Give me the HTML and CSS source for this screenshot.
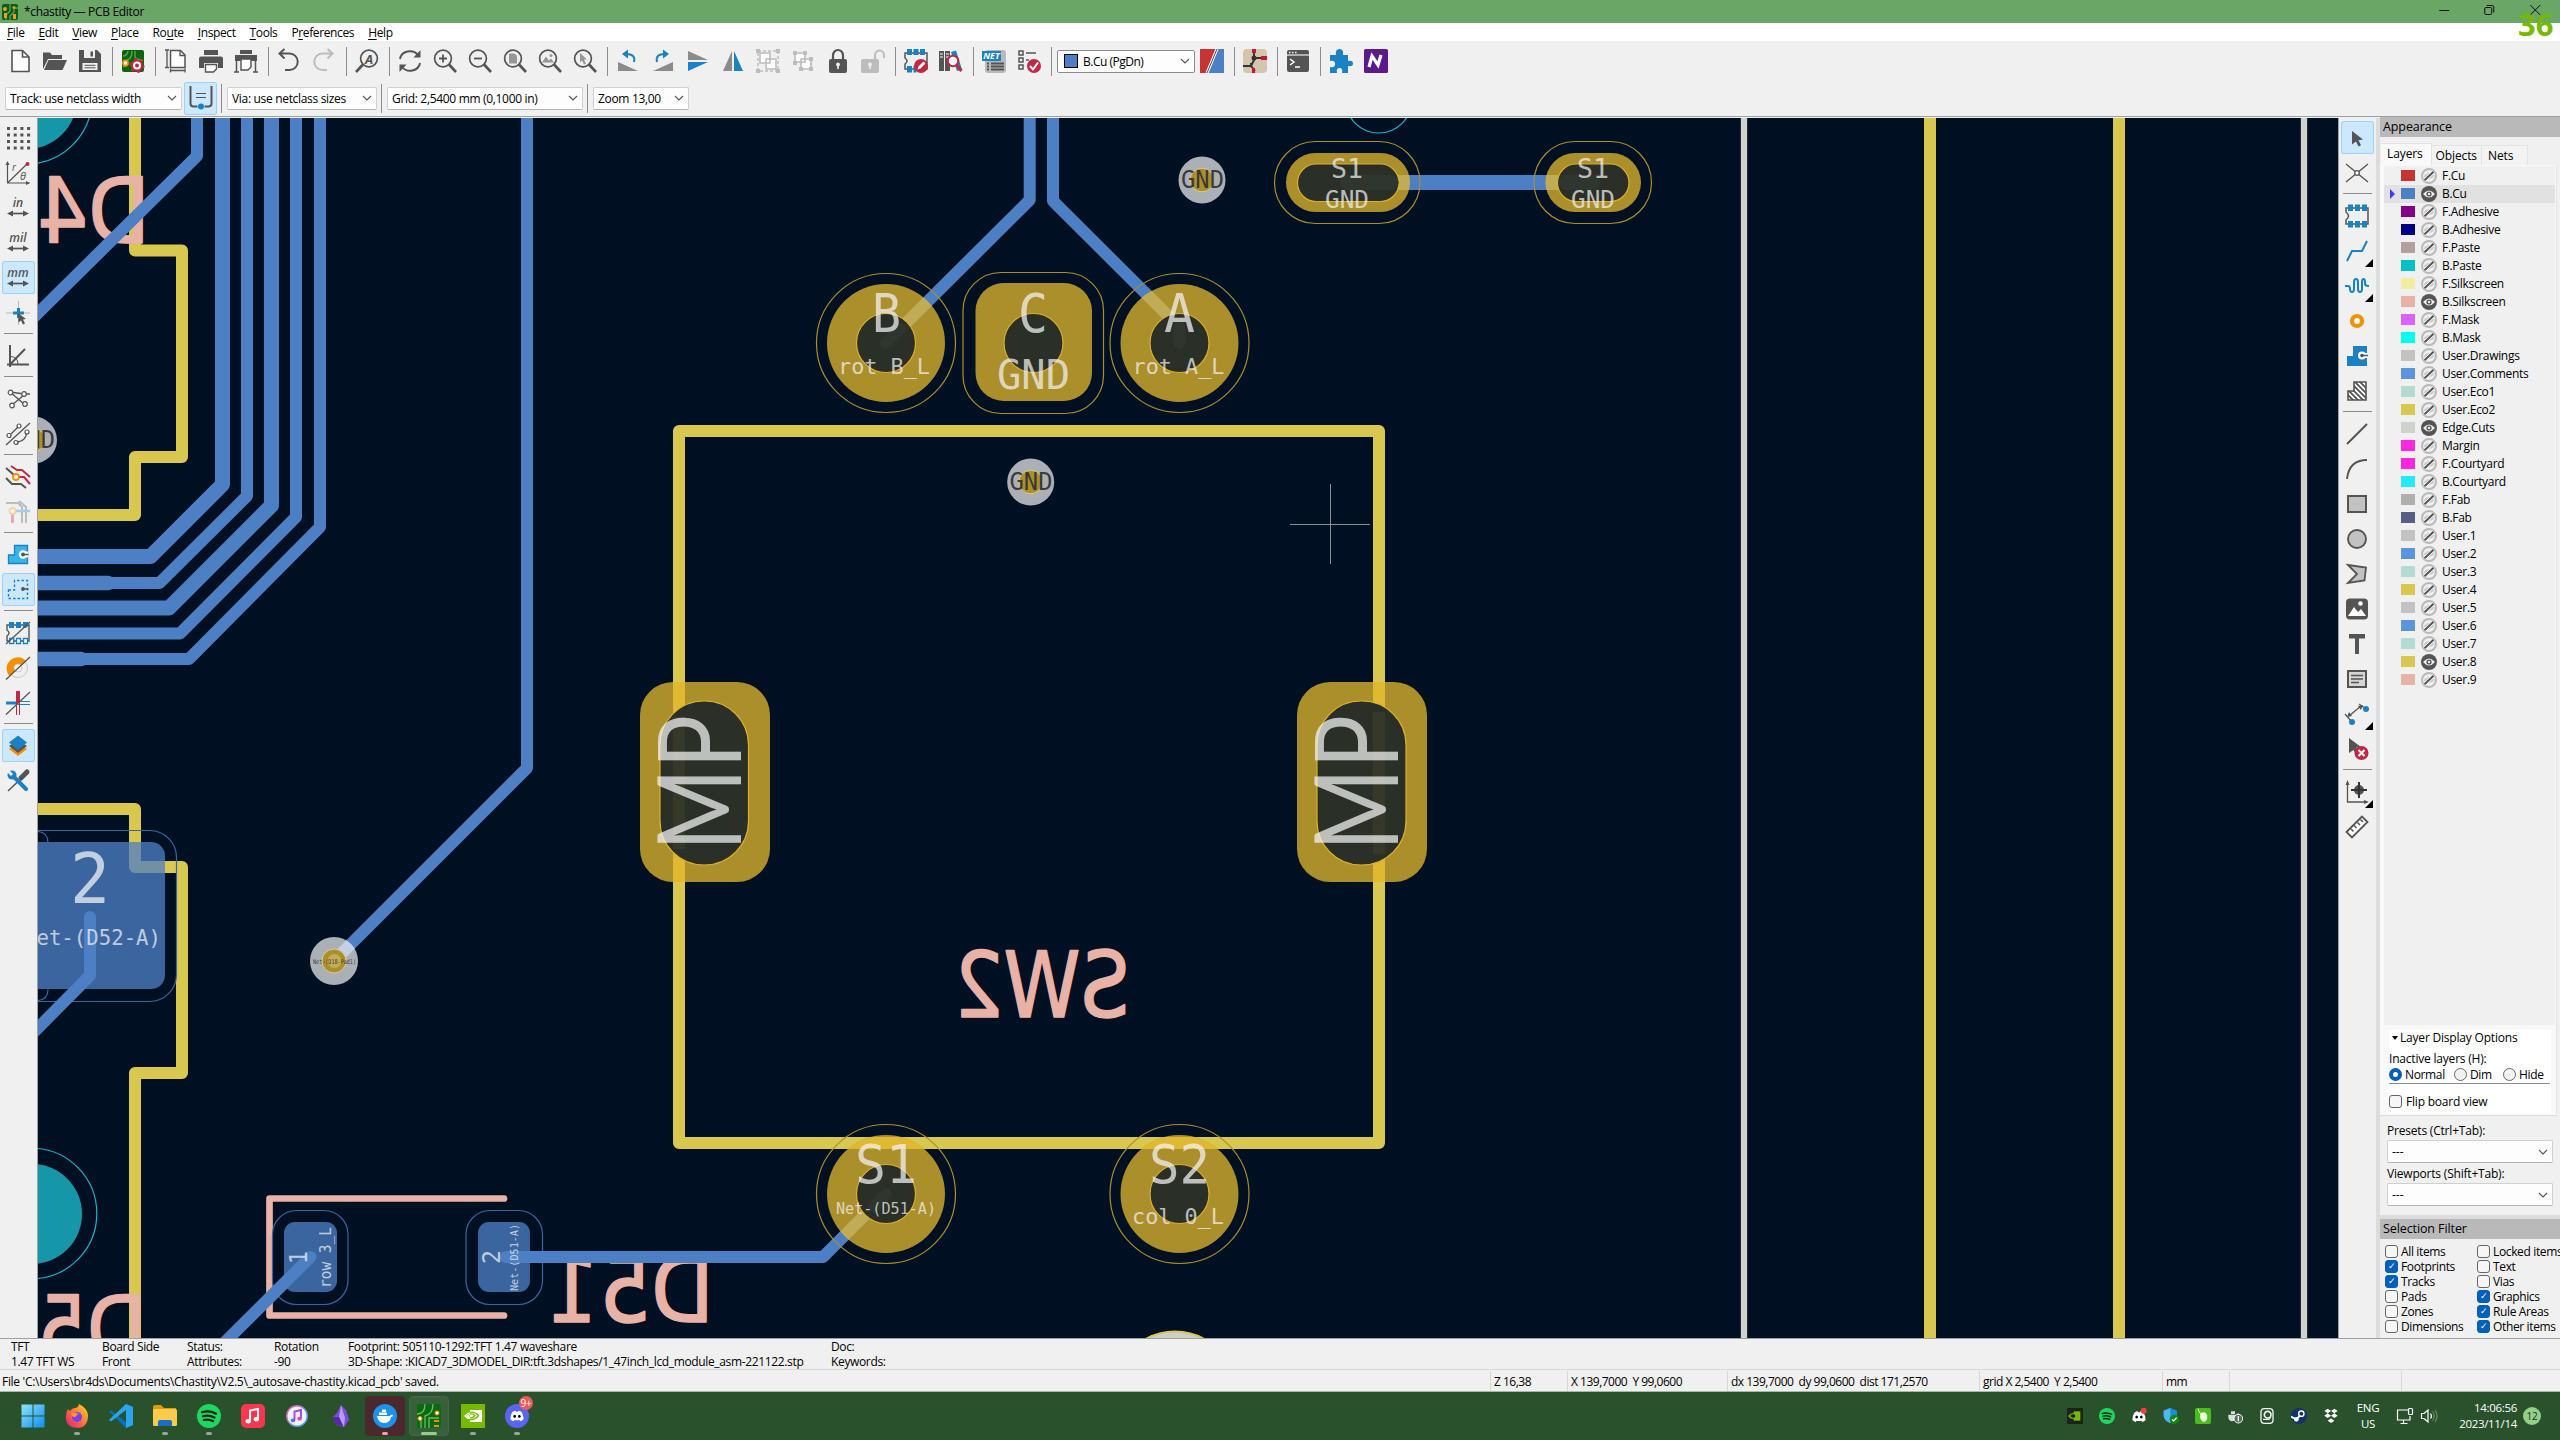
FILE: index.html
```html
<!DOCTYPE html>
<html lang="en">
<head>
<meta charset="utf-8">
<title>*chastity — PCB Editor</title>
<link rel="stylesheet" href="styles.css">
</head>
<body>
<svg class="defs" width="0" height="0">
  <defs>
    <symbol id="on" viewBox="0 0 16 16"><circle cx="8" cy="8" r="8" fill="#545454"/><path d="M2 8q6-7 12 0q-6 7-12 0z" fill="#f0f0f0"/><circle cx="8" cy="8" r="2.600" fill="#545454"/><circle cx="8" cy="8" r="1.200" fill="#f0f0f0"/></symbol>
    <symbol id="off" viewBox="0 0 16 16"><circle cx="8" cy="8" r="7" fill="#efefef" stroke="#b9b9b9" stroke-width="2"/><path d="M2.500 8q5.500-6 11 0q-5.500 6-11 0z" fill="#c9c9c9"/><path d="M3.500 12.500L12.500 3.500" stroke="#f6f6f6" stroke-width="3.800"/><path d="M3.500 12.300L12.500 3.700" stroke="#545454" stroke-width="1.900"/></symbol>
    <symbol id="chev" viewBox="0 0 10 6"><path d="M1 1l4 4 4-4" fill="none" stroke="#555" stroke-width="1.1"/></symbol>
    <symbol id="lens" viewBox="0 0 24 24"><circle cx="10" cy="9.500" r="8.400" fill="none" stroke="#545454" stroke-width="1.700"/><path d="M16 15.500l7 7.500" stroke="#545454" stroke-width="2.600"/></symbol>
    <symbol id="harrow" viewBox="0 0 24 24"><path d="M4 18.500h16" stroke="#545454" stroke-width="1.700"/><path d="M1 18.500l6-3v6zM23 18.500l-6-3v6z" fill="#545454"/></symbol>
    <symbol id="spot" viewBox="0 0 24 24"><circle cx="12" cy="12" r="12" fill="#1ed760"/><path d="M5 8.200q7.500-2 14 1.500M6 12.200q6-1.600 11.500 1.300M6.800 16q5-1.200 9.400 1.200" fill="none" stroke="#10241a" stroke-width="2.200" stroke-linecap="round"/></symbol>
    <symbol id="disc" viewBox="0 0 24 24"><path d="M5 6q3-2 5-2l.7 1.500h2.600L14 4q2 0 5 2 3 5 3 11-2 2.500-5 3l-1.500-2q-3.500 1-7 0L7 20q-3-.5-5-3 0-6 3-11z" fill="#fff"/><ellipse cx="8.500" cy="12.500" rx="2" ry="2.300"/><ellipse cx="15.500" cy="12.500" rx="2" ry="2.300"/></symbol>
    <symbol id="nv" viewBox="0 0 24 24"><path d="M9 6h12v12H9z" fill="#fff"/><path d="M4 12q5-6 11-1-5 7-11 1zM6.500 12q3-3 6.500-.5-3 4-6.500.5z" fill="none" stroke="#fff" stroke-width="1.200"/><path d="M9 8.300q5-.8 8.500 3.200Q14 16 9 15.700M9 10q3-.3 5 1.500-2 2.700-5 2.300" fill="none" stroke="#76b900" stroke-width="1.300"/></symbol>
  </defs>
</svg>

<header class="titlebar">
  <svg class="appicon" viewBox="0 0 16 16"><rect width="16" height="16" rx="2" fill="#0d5a1e"/><path d="M4 16V11l4-4V0M8 16v-4l4-4V4h4" fill="none" stroke="#56a84a" stroke-width="1.300"/><circle cx="3" cy="5" r="2" fill="#f29b1d"/><circle cx="12" cy="3.500" r="1.500" fill="#f29b1d"/><path d="M2 9h3v5H2zM11 10h3v5h-3z" fill="#f29b1d"/></svg>
  <span class="title">*chastity — PCB Editor</span>
  <div class="winbtns">
    <svg viewBox="0 0 12 12"><path d="M1 6.500h10" stroke="#111"/></svg>
    <svg viewBox="0 0 12 12"><rect x="1.500" y="3.500" width="7" height="7" rx="1.200" fill="none" stroke="#111"/><path d="M3.500 1.500h5.500q1.500 0 1.500 1.500v5.500" fill="none" stroke="#111"/></svg>
    <svg viewBox="0 0 12 12"><path d="M1 1l10 10M11 1L1 11" stroke="#111"/></svg>
  </div>
</header>
<div class="fps">36</div>

<nav class="menubar">
  <span><u>F</u>ile</span><span><u>E</u>dit</span><span><u>V</u>iew</span><span><u>P</u>lace</span><span>Ro<u>u</u>te</span><span><u>I</u>nspect</span><span><u>T</u>ools</span><span>P<u>r</u>eferences</span><span><u>H</u>elp</span>
</nav>

<div class="toolbar top">
  <i><svg viewBox="0 0 24 24"><path d="M4 1.500h10.500L21 8v14.500H4z" fill="#fcfcfc" stroke="#545454" stroke-width="1.600"/><path d="M14.500 1.500V8H21" fill="none" stroke="#545454" stroke-width="1.600"/></svg></i>
  <i><svg viewBox="0 0 24 24"><path d="M0 20V3.500h7l2 2.500h10v4H5z" fill="#545454"/><path d="M5.500 11H24l-4.500 10H1z" fill="#545454"/></svg></i>
  <i><svg viewBox="0 0 24 24"><path d="M1 1h18l4 4v18H1z" fill="#545454"/><path d="M6 1h11v8H6zM4.500 14h15v7h-15z" fill="#efefef"/><path d="M12.500 2.500h2.500v5h-2.500z" fill="#545454"/><path d="M6.500 16.300h11M6.500 18.800h11" stroke="#545454" stroke-width="1"/></svg></i>
  <b></b>
  <i><svg viewBox="0 0 24 24"><rect x="1" y="1" width="22" height="22" rx="2" fill="#0b640b"/><path d="M2 12q9 0 9-10M2 7q4 0 5-5M14 2v5q0 4 8 4M2 18l5-2" fill="none" stroke="#47a847" stroke-width="1.500"/><circle cx="4.500" cy="14" r="2.600" fill="#fff" stroke="#f29100" stroke-width="1.600"/><circle cx="16" cy="16.500" r="5" fill="#fff" stroke="#c22746" stroke-width="2"/><circle cx="16" cy="16.500" r="6.600" fill="none" stroke="#c22746" stroke-width="2" stroke-dasharray="3 3.900"/><circle cx="16" cy="16.500" r="2" fill="#c22746"/></svg></i>
  <b></b>
  <i><svg viewBox="0 0 24 24"><path d="M6.500 1.500h10L21 6v12.500H6.500z" fill="#fcfcfc" stroke="#545454" stroke-width="1.500"/><path d="M16 1.500V6.500h5M1 1h4M1 18.500h4M3 1v17M6.500 19.500v4M21 19.500v4M6.500 21.500H21" fill="none" stroke="#545454" stroke-width="1.300"/></svg></i>
  <i><svg viewBox="0 0 24 24"><path d="M5 1h14v5H5zM2 7.500h20q2 0 2 2V19h-5v-5H5v5H0V9.500q0-2 2-2z" fill="#545454"/><path d="M6.500 15.500h11V20l-3 3h-8z" fill="#fcfcfc" stroke="#545454" stroke-width="1.400"/></svg></i>
  <i><svg viewBox="0 0 24 24"><path d="M6 1h12v4H6zM1 6h22v6H1z" fill="#545454"/><path d="M2.500 12v11M21.500 12v11M0 23h5M19 23h5" stroke="#545454" stroke-width="1.500"/><path d="M7 10h10v8l-3 3H7z" fill="#fcfcfc" stroke="#545454" stroke-width="1.400"/></svg></i>
  <b></b>
  <i><svg viewBox="0 0 24 24"><path d="M3 4.500h9.500a8 8 0 0 1 0 16.500H8M7.500 0L2.500 4.500l5 5" fill="none" stroke="#545454" stroke-width="2"/></svg></i>
  <i><svg viewBox="0 0 24 24"><path d="M20 4.500h-9.500a8 8 0 0 0 0 16.500H15M15.500 0l5 4.500-5 5" fill="none" stroke="#bcbcbc" stroke-width="2"/></svg></i>
  <b></b>
  <i><svg viewBox="0 0 24 24"><circle cx="14" cy="9.500" r="8.400" fill="none" stroke="#545454" stroke-width="1.700"/><path d="M8 15.500L1 23" stroke="#545454" stroke-width="2.600"/><text x="14" y="14.500" text-anchor="middle" font-size="13" font-weight="700" fill="#545454">A</text></svg></i>
  <b></b>
  <i><svg viewBox="0 0 24 24"><path d="M2 10a10 9 0 0 1 18-4M22 14a10 9 0 0 1-18 4" fill="none" stroke="#545454" stroke-width="1.900"/><path d="M22.500 1v7.500h-7zM1.500 23v-7.500h7z" fill="#545454"/></svg></i>
  <i><svg viewBox="0 0 24 24"><use href="#lens"/><path d="M10 5.500v8M6 9.500h8" stroke="#545454" stroke-width="1.800"/></svg></i>
  <i><svg viewBox="0 0 24 24"><use href="#lens"/><path d="M6 9.500h8" stroke="#545454" stroke-width="1.800"/></svg></i>
  <i><svg viewBox="0 0 24 24"><use href="#lens"/><path d="M6 4.500h5.500L14 7v7.500H6z" fill="#979797"/></svg></i>
  <i><svg viewBox="0 0 24 24"><use href="#lens"/><path d="M4 13.500l4-6 3 4 2-2 3 4z" fill="#979797"/><circle cx="13" cy="6.500" r="1.500" fill="#979797"/></svg></i>
  <i><svg viewBox="0 0 24 24"><use href="#lens"/><path d="M7 4l7 6.500h-3l2 4-2 1-2-4-2 2z" fill="#979797"/></svg></i>
  <b></b>
  <i><svg viewBox="0 0 24 24"><path d="M2 13l20 9H2z" fill="#8b8b8b"/><path d="M18 13q2-8-8-8" fill="none" stroke="#1a81c4" stroke-width="2"/><path d="M6 5l6-4.500v9z" fill="#1a81c4"/></svg></i>
  <i><svg viewBox="0 0 24 24"><path d="M22 13L2 22h20z" fill="#8b8b8b"/><path d="M6 13q-2-8 8-8" fill="none" stroke="#1a81c4" stroke-width="2"/><path d="M18 5l-6-4.500v9z" fill="#1a81c4"/></svg></i>
  <i><svg viewBox="0 0 24 24"><path d="M2 2v9h20z" fill="#8b8b8b"/><path d="M2 22v-9h20z" fill="#1a81c4"/></svg></i>
  <i><svg viewBox="0 0 24 24"><path d="M2 22h9V2z" fill="#8b8b8b"/><path d="M22 22h-9V2z" fill="#1a81c4"/></svg></i>
  <i><svg viewBox="0 0 24 24"><rect x="2" y="2" width="20" height="20" fill="none" stroke="#bcbcbc" stroke-width="1.400" stroke-dasharray="3 2"/><path d="M4 4h10v10H4zM10 10h10v10H10z" fill="#fcfcfc" stroke="#bcbcbc" stroke-width="1.500"/><path d="M0 0h4v4H0zM20 0h4v4h-4zM0 20h4v4H0zM20 20h4v4h-4z" fill="#bcbcbc"/></svg></i>
  <i><svg viewBox="0 0 24 24"><path d="M4 4h10v9H4zM10 10h10v10H10z" fill="#fcfcfc" stroke="#bcbcbc" stroke-width="1.600"/><path d="M2 2h4v4H2zM12 2h4v4h-4zM2 12h4v4H2zM18 8h4v4h-4zM8 18h4v4H8zM18 18h4v4h-4z" fill="#bcbcbc"/></svg></i>
  <i><svg viewBox="0 0 24 24"><path d="M7 11V6.500a5 5.500 0 0 1 10 0V11" fill="none" stroke="#545454" stroke-width="2.200"/><rect x="3" y="10" width="18" height="14" rx="2" fill="#545454"/><circle cx="12" cy="15.500" r="1.900" fill="#efefef"/><path d="M11.200 16h1.600v4h-1.600z" fill="#efefef"/></svg></i>
  <i><svg viewBox="0 0 24 24"><path d="M14 11V6.500a4.500 5 0 0 1 9 0V9" fill="none" stroke="#bcbcbc" stroke-width="2"/><rect x="0" y="10" width="18" height="14" rx="2" fill="#bcbcbc"/><circle cx="9" cy="15.500" r="1.900" fill="#efefef"/><path d="M8.200 16h1.600v4H8.200z" fill="#efefef"/></svg></i>
  <b></b>
  <i><svg viewBox="0 0 24 24"><path d="M1 4h22v16H1v-5q4-3 0-6z" fill="#efefef" stroke="#545454" stroke-width="1.500"/><path d="M3 0h5v6H3zM9.500 0h5v6h-5zM16 0h5v6h-5zM3 17h5v6.500H3zM9.500 17h3v6.500h-3z" fill="#1a81c4"/><circle cx="17" cy="17" r="7" fill="#c22746"/><path d="M13.500 20.500l1-3 5-5 2 2-5 5z" fill="#fff"/></svg></i>
  <i><svg viewBox="0 0 24 24"><path d="M0 2h5v20H0zM6 2h5v20H6z" fill="#545454"/><path d="M12 3l5-1.500 6 19-5 1.500z" fill="#1a81c4"/><path d="M1 5h3M7 5h3M1 8h3M7 8h3" stroke="#fff"/><circle cx="14" cy="12" r="5.200" fill="#fff" stroke="#c22746" stroke-width="2"/><path d="M17.500 16l5 6" stroke="#c22746" stroke-width="3"/></svg></i>
  <b></b>
  <i><svg viewBox="0 0 24 24"><rect x="3" y="1" width="21" height="23" rx="3" fill="#b9b9b9"/><path d="M0 2h19v10H0z" fill="#1a81c4"/><text x="9.500" y="10.300" text-anchor="middle" font-size="9" font-weight="700" fill="#fff">NET</text><path d="M5 14.500h2M5 17.500h2M5 20.500h2M9 14.500h13M9 17.500h13M9 20.500h13" stroke="#545454" stroke-width="1.800"/></svg></i>
  <i><svg viewBox="0 0 24 24"><path d="M2 2h4v4H2zM2 9h4v4H2zM2 16h4v4H2z" fill="none" stroke="#545454" stroke-width="1.500"/><path d="M9 4h10M9 11h3" stroke="#545454" stroke-width="1.500"/><circle cx="17" cy="17" r="7" fill="#c22746"/><path d="M13 17l3 3.500 5-7" fill="none" stroke="#fff" stroke-width="2"/></svg></i>
  <b></b>
  <div class="select layer"><em></em><span>B.Cu (PgDn)</span><svg class="chev"><use href="#chev"/></svg></div>
  <i><svg viewBox="0 0 24 24"><path d="M0 0h17L7 24H0z" fill="#c83434"/><path d="M17 0h7v24H7z" fill="#4d7fc4"/><path d="M17 0L7 24" stroke="#fff" stroke-width="3"/><path d="M17 0L7 24" stroke="#222" stroke-width=".8"/></svg></i>
  <b></b>
  <i><svg viewBox="0 0 24 24"><rect width="24" height="24" rx="4" fill="#d3c6ac"/><path d="M11 4v7l-3 6M11 9h9M0 17h8l4 5M8 17v-3" fill="none" stroke="#333" stroke-width="2"/><path d="M9 0h4v4H9zM18 7h6v4h-6zM9 19h3v5H9z" fill="#c8143c"/><circle cx="11" cy="9" r="2.500" fill="#333"/></svg></i>
  <b></b>
  <i><svg viewBox="0 0 24 24"><rect x="1" y="1" width="22" height="22" rx="2" fill="#545454"/><path d="M1 6h22" stroke="#efefef" stroke-width="1.200"/><path d="M3 3.500h8" stroke="#efefef" stroke-width="1.600" stroke-dasharray="1.600 1.400"/><path d="M4 10l4 3-4 3M9 18h5" fill="none" stroke="#fff" stroke-width="1.500"/></svg></i>
  <b></b>
  <i><svg viewBox="0 0 24 24"><path d="M1 6h6q-1-6 3.500-6T14 6h5v6q5-1 5 2.500T19 17v7h-6q1-5-2.500-5T8 24H1v-6q5 1 5-3t-5-3z" fill="#1a81c4"/></svg></i>
  <i><svg viewBox="0 0 24 24"><rect width="24" height="24" rx="1.500" fill="#5b1a87"/><path d="M5 18L8 7l6 9 3-10" fill="none" stroke="#fff" stroke-width="3.200"/></svg></i>
</div>

<div class="toolbar second">
  <div class="select w177"><span>Track: use netclass width</span><svg class="chev"><use href="#chev"/></svg></div>
  <i class="active"><svg viewBox="0 0 24 24"><path d="M1.500 0v17.500q0 3 3 3h4M22.500 0v17.500q0 3-3 3h-4" fill="none" stroke="#545454" stroke-width="2"/><path d="M7 7.500h10M7 11.500h10" stroke="#545454" stroke-width="1.200"/><circle cx="12" cy="20.500" r="3" fill="#1a81c4"/></svg></i>
  <b></b>
  <div class="select w150"><span>Via: use netclass sizes</span><svg class="chev"><use href="#chev"/></svg></div>
  <b></b>
  <div class="select w196"><span>Grid: 2,5400 mm (0,1000 in)</span><svg class="chev"><use href="#chev"/></svg></div>
  <b></b>
  <div class="select w96"><span>Zoom 13,00</span><svg class="chev"><use href="#chev"/></svg></div>
</div>

<main class="work">
  <aside class="toolbar side left">
    <i><svg viewBox="0 0 24 24"><path d="M1 2.500h24M1 9h24M1 15.500h24M1 22h24" stroke="#545454" stroke-width="3" stroke-dasharray="3 3.700"/></svg></i>
    <i><svg viewBox="0 0 24 24"><path d="M1.500 1v21h22M1.500 22L21 3" fill="none" stroke="#545454" stroke-width="1.200"/><path d="M1.500 0l2 4h-4zM24 22l-4-2v4z" fill="#545454"/><circle cx="21.500" cy="3" r="2" fill="#c22746"/><text x="6" y="10" font-size="10" fill="#545454">r</text><text x="14" y="19" font-size="11" font-style="italic" fill="#545454">θ</text></svg></i>
    <i><svg viewBox="0 0 24 24"><text x="12" y="11" text-anchor="middle" font-size="12" font-weight="600" fill="#545454">in</text><use href="#harrow" y="-1"/></svg></i>
    <i><svg viewBox="0 0 24 24"><text x="12" y="11" text-anchor="middle" font-size="12" font-weight="600" fill="#545454">mil</text><use href="#harrow" y="-1"/></svg></i>
    <i class="active"><svg viewBox="0 0 24 24"><text x="12" y="11" text-anchor="middle" font-size="12" font-weight="600" fill="#545454">mm</text><use href="#harrow" y="-1"/></svg></i>
    <i><svg viewBox="0 0 24 24"><path d="M0 12h24M12.500 0v24" stroke="#b9b9b9"/><path d="M7 12h11M12.500 7v10" stroke="#1a81c4" stroke-width="3"/><path d="M12 12l8 6-3 .5 2 4-2 1-2-4-2.500 2z" fill="#545454"/></svg></i>
    <b></b>
    <i><svg viewBox="0 0 24 24"><path d="M4 1v22M1 20.500h22M4 20.500L19 5" stroke="#545454" stroke-width="2"/><path d="M4 12.500q8 0 8 8" fill="none" stroke="#545454"/></svg></i>
    <b></b>
    <i><svg viewBox="0 0 24 24"><path d="M4 5l14 12M6 18L18 8M4 5l14 2h6" fill="none" stroke="#545454" stroke-width="1.300"/><g fill="#fff" stroke="#545454" stroke-width="1.200"><circle cx="4.500" cy="5.500" r="2.300"/><circle cx="18" cy="7" r="2.300"/><circle cx="6" cy="18.500" r="2.300"/><circle cx="19" cy="17" r="2.300"/></g></svg></i>
    <i><svg viewBox="0 0 24 24"><path d="M0 23L24 1M3 14L13 4M10 20q10 0 11-11" fill="none" stroke="#545454" stroke-width="1.300"/><g fill="#fff" stroke="#545454" stroke-width="1.200"><circle cx="3" cy="13.500" r="2"/><circle cx="13" cy="4" r="2"/><circle cx="10" cy="20.500" r="2"/><circle cx="21" cy="10" r="2"/></g></svg></i>
    <b></b>
    <i><svg viewBox="0 0 24 24"><path d="M0 3l8 7v4M0 13l6 6h9l5 4" fill="none" stroke="#545454" stroke-width="2"/><path d="M5 1l6 4h5l8 7M13 12h5l6 7" fill="none" stroke="#c22746" stroke-width="2"/><circle cx="10" cy="12" r="3" fill="#fff" stroke="#f29100" stroke-width="1.800"/></svg></i>
    <i><svg viewBox="0 0 24 24"><path d="M0 3h12l4 4v16M13 1l7 6v16" fill="none" stroke="#bcbcbc" stroke-width="2"/><path d="M8 11h16" stroke="#a3cdea" stroke-width="2.500"/><path d="M6.500 12v11" stroke="#e7a9b6" stroke-width="3"/><circle cx="6.500" cy="11" r="3" fill="#fff" stroke="#fbd097" stroke-width="1.800"/></svg></i>
    <b></b>
    <i><svg viewBox="0 0 24 24"><path d="M2.500 12h6V2.500h13v18h-19z" fill="#39b4ea" stroke="#1a81c4" stroke-width="1.300"/><path d="M22 11.500h-5" stroke="#fff" stroke-width="6"/><circle cx="17" cy="11.500" r="4.200" fill="#fff"/><circle cx="17" cy="11.500" r="1.900" fill="#545454"/><path d="M17 11.500h5.500" stroke="#545454" stroke-width="1.500"/></svg></i>
    <i class="active"><svg viewBox="0 0 24 24"><path d="M2.500 12h6V2.500h13v18h-19z" fill="none" stroke="#1a81c4" stroke-width="1.400" stroke-dasharray="2.500 2"/><circle cx="17" cy="11" r="1.900" fill="#545454"/><path d="M17 11h5.500" stroke="#545454" stroke-width="1.500"/></svg></i>
    <b></b>
    <i><svg viewBox="0 0 24 24"><path d="M1 4h22v16H1v-5q4-3 0-6z" fill="#efefef" stroke="#545454" stroke-width="1.400"/><path d="M3 1h5v6H3zM10 1h5v6h-5zM17 1h5v4l-2 2h-3z" fill="#1a81c4"/><path d="M3.700 17.500h4v5h-4zM10.500 17.500h4v5h-4zM17.500 17.500h4v5h-4z" fill="#fff" stroke="#1a81c4" stroke-width="1.300"/><path d="M0 23L24 1" stroke="#545454" stroke-width="1.200"/></svg></i>
    <i><svg viewBox="0 0 24 24"><circle cx="12" cy="12" r="9.500" fill="none" stroke="#c9c9c9"/><circle cx="12" cy="12" r="4" fill="none" stroke="#c9c9c9"/><path d="M3.500 20A10 10 0 1 1 20 5l-5 4a4 4 0 1 0-6 6z" fill="#f29100"/><path d="M0 23.500L24 1" stroke="#545454" stroke-width="1.200"/></svg></i>
    <i><svg viewBox="0 0 24 24"><path d="M0 12h12" stroke="#1a81c4" stroke-width="3"/><path d="M12 10.500h12M12 13.500h12" stroke="#1a81c4" stroke-width="1"/><path d="M12 0v12" stroke="#c22746" stroke-width="4"/><path d="M10.500 12v12M13.500 12v12" stroke="#c22746" stroke-width="1"/><path d="M0 23.500L24 1" stroke="#545454" stroke-width="1.200"/></svg></i>
    <b></b>
    <i class="active"><svg viewBox="0 0 24 24"><path d="M3 15l9-6 9 6-9 7z" fill="#f29100"/><path d="M3 12l9-6 9 6-9 7z" fill="#545454"/><path d="M3 8.500l9-7 9 7-9 7.500z" fill="#1a81c4"/></svg></i>
    <i><svg viewBox="0 0 24 24"><path d="M22 3L2 22" stroke="#545454" stroke-width="1.500"/><path d="M15 9l6-6" stroke="#545454" stroke-width="5" stroke-linecap="round"/><path d="M6 6l14 14" stroke="#1a81c4" stroke-width="4" stroke-linecap="round"/><circle cx="6" cy="6" r="4.500" fill="#1a81c4"/><path d="M1 1l5 5" stroke="#efefef" stroke-width="3"/></svg></i>
  </aside>

  <svg class="board" viewBox="38 118 2300 1220" width="2300" height="1220">
    <defs>
      <clipPath id="pads"><circle cx="886" cy="343" r="59"/><circle cx="1179.500" cy="343" r="59"/><circle cx="886" cy="1194" r="59"/><circle cx="1179.500" cy="1194" r="59"/><rect x="640" y="682" width="130" height="200" rx="33"/><rect x="1297" y="682" width="130" height="200" rx="33"/><rect x="1286" y="153" width="124" height="59" rx="29.500"/><rect x="1545.500" y="153" width="95.500" height="59" rx="29.500"/></clipPath>
      <clipPath id="vclip"><circle cx="334" cy="961" r="24"/></clipPath>
      <clipPath id="smd"><rect x="20" y="842" width="145" height="147" rx="14"/></clipPath>
    </defs>
    <g fill="#1597a9"><circle cx="26.500" cy="98.500" r="50.500"/><circle cx="32" cy="1214" r="50"/></g>
    <g fill="none" stroke="#1fb4c4" stroke-width="1.200"><circle cx="26.500" cy="98.500" r="65.500"/><circle cx="31.500" cy="1213.500" r="65.300"/><circle cx="1378.700" cy="100" r="33"/></g>

    <g fill="none" stroke="#d8c850" stroke-width="12" stroke-linejoin="round">
      <path d="M135 100V250.500H182V457H135V515H20M20 809H135V867H182V1073H135V1350M1930 100v1250M2119 100v1250"/>
      <path d="M679 431H1379V1143H679z"/>
    </g>
    <path d="M1744 100v1250M2304 100v1250" stroke="#d0d2cd" stroke-width="6.300"/>

    <g class="silk">
      <text transform="translate(150 243) scale(-1 1)" textLength="113" lengthAdjust="spacingAndGlyphs">D4</text>
      <text transform="translate(1130 1016.500) scale(-1 1)" textLength="176" lengthAdjust="spacingAndGlyphs">SW2</text>
      <text transform="translate(714 1322) scale(-1 1)" textLength="167" lengthAdjust="spacingAndGlyphs">D51</text>
      <text transform="translate(147 1361) scale(-1 1)" textLength="110" lengthAdjust="spacingAndGlyphs">D5</text>
    </g>
    <path d="M504 1198.500H269.500V1315.500H504" fill="none" stroke="#e8b2a7" stroke-width="6.700" stroke-linecap="round" stroke-linejoin="round"/>

    <g fill="#3b659e"><rect x="20" y="842" width="145" height="147" rx="14"/><rect x="284" y="1222" width="53" height="70" rx="11"/><rect x="478" y="1222" width="52" height="70" rx="11"/></g>
    <path clip-path="url(#smd)" d="M135 809V867H182" fill="none" stroke="#7190a5" stroke-width="12" stroke-linejoin="round"/>
    <g fill="none" stroke="#3b659e" stroke-width="1.200"><rect x="0" y="830.500" width="176.500" height="171" rx="27"/><path d="M38 831.500q10 1 10 11M38 1000.500q10-1 10-11"/><rect x="272.500" y="1210.500" width="75.500" height="94" rx="24"/><rect x="466" y="1210.500" width="76.500" height="94" rx="24"/></g>

    <g fill="none" stroke="#4d7fc4" stroke-width="12" stroke-linejoin="round" stroke-linecap="round">
      <path d="M197 100V156L30 321M247 100V496L159.500 583H30M296 100V517L180 633.500H30M320 100V527L189 659H30"/>
      <path stroke-width="15" d="M222.500 100V484.500L150.500 556.500H30M271.500 100V505.500L169 608H30"/>
      <path stroke-width="14.500" d="M30 583H108M30 659H81"/>
      <path d="M527 100V768L334 961M1029.700 100V200L886 343M1053 100V201L1179.500 327V343M90 917V975.500L30 1036M310.500 1257L210 1357M506 1257H823L886 1194"/>
      <path stroke-width="15" d="M1347 182.500H1593"/>
    </g>

    <g fill="#aab0b5"><circle cx="1202" cy="180" r="23.500"/><circle cx="1030.700" cy="482" r="23.500"/><circle cx="33.500" cy="440" r="23.500"/><circle cx="334" cy="961" r="24"/></g>
    <path clip-path="url(#vclip)" d="M380 915L334 961" stroke="#c4d0e3" stroke-width="12"/>
    <g fill="#ab8f2b" stroke="#dcca90" stroke-width="1"><circle cx="1202" cy="180" r="11.800"/><circle cx="1030.700" cy="482" r="11.800"/><circle cx="33.500" cy="440" r="11.800"/><circle cx="334" cy="961" r="12"/></g>
    <circle cx="334.500" cy="961" r="7" fill="#c0ad5a"/>

    <g fill="#ab8f2b">
      <circle cx="886" cy="343" r="59"/><circle cx="1179.500" cy="343" r="59"/><circle cx="886" cy="1194" r="59"/><circle cx="1179.500" cy="1194" r="59"/>
      <rect x="975.500" y="283" width="116.500" height="118" rx="28"/>
      <rect x="640" y="682" width="130" height="200" rx="33"/><rect x="1297" y="682" width="130" height="200" rx="33"/>
      <rect x="1286" y="153" width="124" height="59" rx="29.500"/><rect x="1545.500" y="153" width="95.500" height="59" rx="29.500"/>
    </g>
    <g clip-path="url(#pads)" fill="none" stroke-width="12">
      <path d="M679 431H1379V1143H679z" stroke="#e0b932"/>
      <path d="M1029.700 200L886 343M1053 201L1179.500 327M823 1257L886 1194" stroke="#c0ac57"/>
      <path d="M1347 182.500H1593" stroke="#c0ac57" stroke-width="15"/>
    </g>
    <g fill="#2a2f27" stroke="#dcb02c" stroke-width="1.200">
      <circle cx="886" cy="343" r="29.500"/><circle cx="1179.500" cy="343" r="29.500"/><circle cx="1033.500" cy="343" r="29.500"/><circle cx="886" cy="1194" r="29.500"/><circle cx="1179.500" cy="1194" r="29.500"/>
      <rect x="660" y="701" width="88.500" height="164" rx="44"/><rect x="1317" y="701" width="89" height="164" rx="44"/>
      <rect x="1297.500" y="164" width="101.500" height="37.500" rx="18.700"/><rect x="1557.500" y="164" width="71.500" height="37.500" rx="18.700"/>
    </g>
    <path d="M679 717V849M1379 712V854" stroke="#36392a" stroke-width="12"/>
    <g fill="none" stroke="#2f352f" stroke-width="12" stroke-linecap="round"><path d="M900 329L886 343M1179.500 327V343M886 1194l-12 12"/><path d="M1347 182.500H1391M1566 182.500H1593" stroke-width="15"/></g>
    <g fill="none" stroke="#ab8f2b" stroke-width="1.200">
      <circle cx="886" cy="343" r="69.500"/><circle cx="1179.500" cy="343" r="69.500"/><circle cx="886" cy="1194" r="69.500"/><circle cx="1179.500" cy="1194" r="69.500"/>
      <rect x="963" y="272.500" width="140.500" height="141" rx="38"/>
      <rect x="1274.500" y="141.500" width="145.500" height="82" rx="41"/><rect x="1534" y="141.500" width="117.500" height="82" rx="41"/>
    </g>
    <circle cx="1175" cy="1391" r="59.500" fill="#cfcfc9" stroke="#d8c850" stroke-width="2"/>

    <g class="net">
      <text x="872" y="332" font-size="53" textLength="29" lengthAdjust="spacingAndGlyphs">B</text>
      <text x="1018" y="332" font-size="53" textLength="30" lengthAdjust="spacingAndGlyphs">C</text>
      <text x="1164" y="332" font-size="53" textLength="31" lengthAdjust="spacingAndGlyphs">A</text>
      <text x="997" y="389" font-size="40" textLength="73" lengthAdjust="spacingAndGlyphs">GND</text>
      <text x="838" y="374" font-size="22" textLength="92" lengthAdjust="spacingAndGlyphs">rot B_L</text>
      <text x="1132.500" y="374" font-size="22" textLength="92" lengthAdjust="spacingAndGlyphs">rot A_L</text>
      <text x="1331" y="178" font-size="26" textLength="32" lengthAdjust="spacingAndGlyphs">S1</text>
      <text x="1325" y="207.500" font-size="25" textLength="44" lengthAdjust="spacingAndGlyphs">GND</text>
      <text x="1577" y="178" font-size="26" textLength="32" lengthAdjust="spacingAndGlyphs">S1</text>
      <text x="1571" y="207.500" font-size="25" textLength="44" lengthAdjust="spacingAndGlyphs">GND</text>
      <text x="855" y="1183" font-size="54" textLength="62" lengthAdjust="spacingAndGlyphs">S1</text>
      <text x="1149" y="1183" font-size="54" textLength="61" lengthAdjust="spacingAndGlyphs">S2</text>
      <text x="836" y="1214" font-size="15.500" textLength="100" lengthAdjust="spacingAndGlyphs">Net-(D51-A)</text>
      <text x="1132" y="1224" font-size="22" textLength="92" lengthAdjust="spacingAndGlyphs">col 0_L</text>
      <text class="mp" transform="translate(741 851) rotate(-90)" font-size="116" textLength="136" lengthAdjust="spacingAndGlyphs">MP</text>
      <text class="mp" transform="translate(1398 851) rotate(-90)" font-size="116" textLength="136" lengthAdjust="spacingAndGlyphs">MP</text>
    </g>
    <g class="net blue">
      <text x="70" y="903" font-size="69" textLength="40" lengthAdjust="spacingAndGlyphs">2</text>
      <text x="24" y="945" font-size="22" textLength="137" lengthAdjust="spacingAndGlyphs">Net-(D52-A)</text>
      <text transform="translate(306.500 1264) rotate(-90)" font-size="24" textLength="13" lengthAdjust="spacingAndGlyphs">1</text>
      <text transform="translate(331 1288) rotate(-90)" font-size="15" textLength="61" lengthAdjust="spacingAndGlyphs">row 3_L</text>
      <text transform="translate(500 1264) rotate(-90)" font-size="24" textLength="14" lengthAdjust="spacingAndGlyphs">2</text>
      <text transform="translate(518 1291) rotate(-90)" font-size="11" textLength="67" lengthAdjust="spacingAndGlyphs">Net-(D51-A)</text>
    </g>
    <g class="net dark">
      <text x="1181" y="187.500" font-size="25" textLength="43" lengthAdjust="spacingAndGlyphs">GND</text>
      <text x="1009.500" y="489.500" font-size="25" textLength="43" lengthAdjust="spacingAndGlyphs">GND</text>
      <text x="12" y="448" font-size="25" textLength="43" lengthAdjust="spacingAndGlyphs">GND</text>
      <text x="313" y="963.500" font-size="6.500" textLength="43" lengthAdjust="spacingAndGlyphs">Net-(D18-Pad1)</text>
    </g>
    <path d="M1290 524.500h80M1330.500 484v80" stroke="#8a8f95" stroke-width="1"/>
  </svg>

  <aside class="toolbar side right">
    <i class="active"><svg viewBox="0 0 24 24"><path d="M7 5l11 8.500-4.500.7 2.500 5-2.500 1.300-2.500-5L7 18.500z" fill="#545454"/></svg></i>
    <i><svg viewBox="0 0 24 24"><path d="M1 3l22 18M23 3L1 21" stroke="#545454" stroke-width="1.300"/><circle cx="12" cy="12" r="2.300" fill="#fff" stroke="#545454" stroke-width="1.300"/></svg></i>
    <b></b>
    <i><svg viewBox="0 0 24 24"><path d="M1 4h22v16H1v-4q5-4 0-8z" fill="#efefef" stroke="#545454" stroke-width="1.500"/><path d="M3 .5h5V7H3zM10 .5h5V7h-5zM17 .5h5V7h-5zM3 17h5v6.500H3zM10 17h5v6.500h-5zM17 17h5v6.500h-5z" fill="#1a81c4"/></svg></i>
    <i class="more"><svg viewBox="0 0 24 24"><path d="M2 22l5-10h10l5-10" fill="none" stroke="#1a81c4" stroke-width="2"/></svg></i>
    <i class="more"><svg viewBox="0 0 24 24"><path d="M0 12h3q2 0 2 3t2 3 2-3V8q0-3 2-3t2 3v7q0 3 2 3t2-3V8q0-3 1.500-3T20 8v2q0 2 4 2" fill="none" stroke="#1a81c4" stroke-width="2"/></svg></i>
    <i><svg viewBox="0 0 24 24"><circle cx="12" cy="12" r="5" fill="#fff" stroke="#f29100" stroke-width="4.200"/></svg></i>
    <i><svg viewBox="0 0 24 24"><path d="M2 22V12h6V2h14v20z" fill="#1a81c4"/><circle cx="17" cy="11.500" r="4" fill="#fff"/><path d="M17 11.500h6" stroke="#fff" stroke-width="5"/><circle cx="17" cy="11.500" r="1.800" fill="#545454"/><path d="M17 11.500h6" stroke="#545454" stroke-width="1.500"/></svg></i>
    <i><svg viewBox="0 0 24 24"><clipPath id="hz"><path d="M3 21V12h6V3h12v18z"/></clipPath><path d="M3 21V12h6V3h12v18z" fill="#fff" stroke="#545454" stroke-width="1.600"/><path clip-path="url(#hz)" d="M0 8l20 20M0 13l14 14M0 3l24 24M3 1l24 24M8 1l20 20M13 1l14 14" stroke="#545454" stroke-width="1.800"/></svg></i>
    <b></b>
    <i><svg viewBox="0 0 24 24"><path d="M2 22L22 2" stroke="#545454" stroke-width="2"/></svg></i>
    <i><svg viewBox="0 0 24 24"><path d="M2 22Q4 3 22 3" fill="none" stroke="#545454" stroke-width="1.900"/></svg></i>
    <i><svg viewBox="0 0 24 24"><rect x="3" y="4" width="18" height="16" fill="#c2c2c2" stroke="#545454" stroke-width="2"/></svg></i>
    <i><svg viewBox="0 0 24 24"><circle cx="12" cy="12" r="9" fill="#c2c2c2" stroke="#545454" stroke-width="1.900"/></svg></i>
    <i><svg viewBox="0 0 24 24"><path d="M3 3l18 2.500-1.500 13L3 21l9-9z" fill="#c2c2c2" stroke="#545454" stroke-width="1.800"/></svg></i>
    <i><svg viewBox="0 0 24 24"><rect x="1" y="1.500" width="22" height="21" rx="4" fill="#545454"/><path d="M3 19l6-9 4 5 3-3 5 7z" fill="#fff"/><circle cx="15.500" cy="6.500" r="2.300" fill="#fff"/></svg></i>
    <i><svg viewBox="0 0 24 24"><path d="M4 2h16v4.500h-6V22h-4V6.500H4z" fill="#545454"/></svg></i>
    <i><svg viewBox="0 0 24 24"><rect x="3" y="4" width="18" height="16" fill="#d5d5d5" stroke="#545454" stroke-width="2"/><path d="M6 8.500h12M6 12h12M6 15.500h8" stroke="#545454" stroke-width="1.400"/></svg></i>
    <i class="more"><svg viewBox="0 0 24 24"><path d="M4 14L16 4M0 12l6 7M14 2l7 5" stroke="#545454" stroke-width="1.200"/><path d="M2 15l2-5 3 4zM18 3l-2 5-3-4z" fill="#545454"/><circle cx="7" cy="20" r="3" fill="#1a81c4"/><circle cx="21" cy="7" r="3" fill="#1a81c4"/></svg></i>
    <i><svg viewBox="0 0 24 24"><path d="M4 1l12 9-5 .7 3 6-3 1.300-2.500-5L4 16z" fill="#545454"/><circle cx="16.500" cy="16" r="7" fill="#c22746"/><path d="M13.500 13l6 6M19.500 13l-6 6" stroke="#fff" stroke-width="2"/></svg></i>
    <b></b>
    <i class="more"><svg viewBox="0 0 24 24"><path d="M2.500 3v19H22" fill="none" stroke="#545454" stroke-width="1.300"/><path d="M2.500 0l2 5h-4zM24 22l-5-2v4z" fill="#545454"/><circle cx="14" cy="10" r="5" fill="#545454"/><path d="M6 10h16M14 2v16" stroke="#333" stroke-width="2"/></svg></i>
    <i><svg viewBox="0 0 24 24"><path d="M1.500 17L17 1.500l5.500 5.500L7 22.500z" fill="#fff" stroke="#545454" stroke-width="1.800"/><path d="M6 14l2.500 2.500M9 10.500l2.500 2.500M12.500 7.500l2.500 2.500M15.500 4.500L18 7" stroke="#545454" stroke-width="1.500"/></svg></i>
  </aside>

  <aside class="panel">
    <h2>Appearance</h2>
    <div class="tabs"><span class="tab sel">Layers</span><span class="tab">Objects</span><span class="tab nets">Nets</span></div>
    <div class="page">
      <ul class="layers">
        <li><em style="background:#c83434"></em><svg><use href="#off"/></svg>F.Cu</li>
        <li class="cur"><em style="background:#4d7fc4"></em><svg><use href="#on"/></svg>B.Cu</li>
        <li><em style="background:#840084"></em><svg><use href="#off"/></svg>F.Adhesive</li>
        <li><em style="background:#000084"></em><svg><use href="#off"/></svg>B.Adhesive</li>
        <li><em style="background:#b4a09a"></em><svg><use href="#off"/></svg>F.Paste</li>
        <li><em style="background:#00c2c2"></em><svg><use href="#off"/></svg>B.Paste</li>
        <li><em style="background:#f2eda1"></em><svg><use href="#off"/></svg>F.Silkscreen</li>
        <li><em style="background:#e8b2a7"></em><svg><use href="#on"/></svg>B.Silkscreen</li>
        <li><em style="background:#d864ff"></em><svg><use href="#off"/></svg>F.Mask</li>
        <li><em style="background:#02ffee"></em><svg><use href="#off"/></svg>B.Mask</li>
        <li><em style="background:#c2c2c2"></em><svg><use href="#off"/></svg>User.Drawings</li>
        <li><em style="background:#5994dc"></em><svg><use href="#off"/></svg>User.Comments</li>
        <li><em style="background:#b4dbd2"></em><svg><use href="#off"/></svg>User.Eco1</li>
        <li><em style="background:#d8c852"></em><svg><use href="#off"/></svg>User.Eco2</li>
        <li><em style="background:#d0d2cd"></em><svg><use href="#on"/></svg>Edge.Cuts</li>
        <li><em style="background:#ff26e2"></em><svg><use href="#off"/></svg>Margin</li>
        <li><em style="background:#ff26e2"></em><svg><use href="#off"/></svg>F.Courtyard</li>
        <li><em style="background:#26e9ff"></em><svg><use href="#off"/></svg>B.Courtyard</li>
        <li><em style="background:#afafaf"></em><svg><use href="#off"/></svg>F.Fab</li>
        <li><em style="background:#585d84"></em><svg><use href="#off"/></svg>B.Fab</li>
        <li><em style="background:#c2c2c2"></em><svg><use href="#off"/></svg>User.1</li>
        <li><em style="background:#5994dc"></em><svg><use href="#off"/></svg>User.2</li>
        <li><em style="background:#b4dbd2"></em><svg><use href="#off"/></svg>User.3</li>
        <li><em style="background:#d8c852"></em><svg><use href="#off"/></svg>User.4</li>
        <li><em style="background:#c2c2c2"></em><svg><use href="#off"/></svg>User.5</li>
        <li><em style="background:#5994dc"></em><svg><use href="#off"/></svg>User.6</li>
        <li><em style="background:#b4dbd2"></em><svg><use href="#off"/></svg>User.7</li>
        <li><em style="background:#d8c852"></em><svg><use href="#on"/></svg>User.8</li>
        <li><em style="background:#e8b2a7"></em><svg><use href="#off"/></svg>User.9</li>
      </ul>
      <div class="options">
        <div class="fold"><s></s>Layer Display Options</div>
        <div class="line">Inactive layers (H):</div>
        <div class="radios"><span class="radio sel">Normal</span><span class="radio">Dim</span><span class="radio">Hide</span></div>
        <div class="check flip">Flip board view</div>
      </div>
    </div>
    <div class="presets">
      <label>Presets (Ctrl+Tab):</label>
      <div class="select"><span>---</span><svg class="chev"><use href="#chev"/></svg></div>
      <label>Viewports (Shift+Tab):</label>
      <div class="select"><span>---</span><svg class="chev"><use href="#chev"/></svg></div>
    </div>
    <h2 class="filter-head">Selection Filter</h2>
    <div class="filter">
      <span class="check">All items</span><span class="check">Locked items</span>
      <span class="check sel">Footprints</span><span class="check">Text</span>
      <span class="check sel">Tracks</span><span class="check">Vias</span>
      <span class="check">Pads</span><span class="check sel">Graphics</span>
      <span class="check">Zones</span><span class="check sel">Rule Areas</span>
      <span class="check">Dimensions</span><span class="check sel">Other items</span>
    </div>
  </aside>
</main>

<section class="info">
  <div>TFT<br>1.47 TFT WS</div><div>Board Side<br>Front</div><div>Status:<br>Attributes:</div><div>Rotation<br>-90</div><div>Footprint: 505110-1292:TFT 1.47 waveshare<br>3D-Shape: :KICAD7_3DMODEL_DIR:tft.3dshapes/1_47inch_lcd_module_asm-221122.stp</div><div>Doc:<br>Keywords:</div>
</section>
<footer class="status">
  <div class="path">File 'C:\Users\br4ds\Documents\Chastity\V2.5\_autosave-chastity.kicad_pcb' saved.</div><div>Z 16,38</div><div>X 139,7000&nbsp; Y 99,0600</div><div>dx 139,7000&nbsp; dy 99,0600&nbsp; dist 171,2570</div><div>grid X 2,5400&nbsp; Y 2,5400</div><div>mm</div><div></div><div></div>
</footer>

<div class="taskbar">
  <div class="apps">
    <a><svg viewBox="0 0 24 24"><linearGradient id="wg" x2="1" y2="1"><stop stop-color="#8fe2fb"/><stop offset="1" stop-color="#0f8df0"/></linearGradient><path d="M.5.500h11v11H.5zM12.500.500h11v11h-11zM.5 12.500h11v11H.5zM12.500 12.500h11v11h-11z" fill="url(#wg)"/></svg></a>
    <a class="run"><svg viewBox="0 0 24 24"><linearGradient id="ff" x1="1" x2="0" y2="1"><stop stop-color="#ffe226"/><stop offset=".5" stop-color="#ff7139"/><stop offset="1" stop-color="#e31587"/></linearGradient><path d="M3 5l2 2q2-3 5-3 3 0 4-4 8 4 9 11 0 13-11 13Q0 23 1 12q0-4 2-7z" fill="url(#ff)"/><circle cx="12" cy="13" r="5" fill="#7542e5"/><path d="M6 9q5-1 8 1-2 0-3 2t-4 0z" fill="#ff9a2a"/></svg></a>
    <a><svg viewBox="0 0 24 24"><path d="M17 0l7 3v18l-7 3L2 9.500 0 8l2-1.500L17 18z" fill="#0a70bb"/><path d="M17 0l7 3v18l-7 3V6L2 17.500 0 16l2-2z" fill="#2aa4ee"/></svg></a>
    <a class="run"><svg viewBox="0 0 24 24"><path d="M0 3q0-2 2-2h6l3 3h12v5H0z" fill="#dd9a0b"/><rect y="5" width="24" height="17" rx="1.500" fill="#fccb49"/><path d="M5 22v-4q0-2 2-2h10q2 0 2 2v4z" fill="#1370c4"/></svg></a>
    <a class="run"><svg viewBox="0 0 24 24"><use href="#spot"/></svg></a>
    <a><svg viewBox="0 0 24 24"><rect width="24" height="24" rx="5" fill="#fa3650"/><path d="M9 17V6.500L17 5v10" fill="none" stroke="#fff" stroke-width="2"/><ellipse cx="7.300" cy="17.300" rx="2.700" ry="2.200" fill="#fff"/><ellipse cx="15.300" cy="15.300" rx="2.700" ry="2.200" fill="#fff"/></svg></a>
    <a><svg viewBox="0 0 24 24"><linearGradient id="it" x2="1" y2="1"><stop stop-color="#f05ba5"/><stop offset="1" stop-color="#2ab0f5"/></linearGradient><circle cx="12" cy="12" r="10.300" fill="#f3f1fa" stroke="url(#it)" stroke-width="1.500"/><path d="M9.500 16V7.500L16 6v8.500" fill="none" stroke="#a14be0" stroke-width="1.900"/><ellipse cx="8" cy="16.300" rx="2.200" ry="1.900" fill="#5f6bf0"/><ellipse cx="14.500" cy="14.700" rx="2.200" ry="1.900" fill="#e4459f"/></svg></a>
    <a><svg viewBox="0 0 24 24"><path d="M12 1l5 5 3 10-5 7-9-3-2-7 4-4z" fill="#7c4bdc"/><path d="M12 1l-2 12 5 10 1-9z" fill="#b79cf5"/><path d="M4 13l6 0 4 9-8-2z" fill="#5428a6"/></svg></a>
    <a class="run alert"><svg viewBox="0 0 24 24"><circle cx="12" cy="12" r="12" fill="#1d91ee"/><path d="M4 12h13q1-2 3-1 0 2-2 2-1 6-7 6-6 0-7-7z" fill="#fff"/><path d="M6 11V8.500h8V11M9 8V5.500h4V8" fill="#fff"/></svg></a>
    <a class="run focus"><svg viewBox="0 0 24 24"><rect width="24" height="24" rx="2" fill="#0a6a14"/><path d="M0 10q8 0 8-10M8 24V12q8-2 8-12M12 24V14h10M4 24V16" fill="none" stroke="#6fbb5c" stroke-width="1.300"/><circle cx="3" cy="14.500" r="2" fill="#fff" stroke="#f29100"/><circle cx="20" cy="9" r="2" fill="#fff" stroke="#f29100"/><path d="M17 16h5v2h-5zM17 21h5v2h-5z" fill="#f29100"/></svg></a>
    <a class="run"><svg viewBox="0 0 24 24"><path d="M0 0h24v24H0z" fill="#76b900"/><use href="#nv"/></svg></a>
    <a class="run"><svg viewBox="0 0 24 24"><circle cx="12" cy="12" r="12" fill="#5865f2"/><use href="#disc" x="4" y="4" width="16" height="16"/></svg><span class="badge">9+</span></a>
  </div>
  <div class="tray">
    <svg viewBox="0 0 24 24"><path d="M0 0h24v24H0z" fill="#1c221c"/><path d="M10 5h10v14H10z" fill="#76b900"/><path d="M3 12q6-7 12 0-6 7-12 0z" fill="none" stroke="#76b900" stroke-width="2"/><circle cx="10" cy="12" r="2.500" fill="#1c221c"/></svg>
    <svg viewBox="0 0 24 24"><use href="#spot"/></svg>
    <svg viewBox="0 0 24 24"><use href="#disc" y="1"/><circle cx="19" cy="4" r="4.500" fill="#f23f42"/></svg>
    <svg viewBox="0 0 24 24"><path d="M11 0l10 4v8q-1 7-10 11Q2 19 1 12V4z" fill="#1b8ce0"/><path d="M11 0v23Q2 19 1 12V4z" fill="#4cb9f5"/><circle cx="17" cy="17" r="7" fill="#128712"/><path d="M13.500 17l2.500 2.500 4.500-5" fill="none" stroke="#fff" stroke-width="1.800"/></svg>
    <svg viewBox="0 0 24 24"><rect width="24" height="24" rx="3" fill="#4cbc1c"/><path d="M8 8q8-4 10 3t-4 10q-8-1-6-13z" fill="#e8ffe0"/><path d="M8 8q-3-2-3-7" fill="none" stroke="#e8ffe0" stroke-width="1.500"/></svg>
    <svg viewBox="0 0 24 24"><path d="M2 10h12q2-3 5-1-1 3-4 3-2 8-8 8-6-1-5-10zM6 5h6v4H6z" fill="#d9ddd9"/><circle cx="17" cy="16" r="6.500" fill="#5a6e5a" stroke="#fff" stroke-width="1.400"/><path d="M17 12v8" stroke="#fff" stroke-width="2"/></svg>
    <svg viewBox="0 0 24 24"><rect x="3" y="1" width="18" height="22" rx="5" fill="none" stroke="#f2f2f2" stroke-width="2"/><circle cx="13" cy="10" r="5" fill="none" stroke="#f2f2f2" stroke-width="2.500"/><path d="M6 17h9l3-4" fill="none" stroke="#f2f2f2" stroke-width="2"/></svg>
    <svg viewBox="0 0 24 24"><circle cx="12" cy="12" r="12" fill="#15326b"/><circle cx="15.500" cy="8.500" r="4" fill="none" stroke="#fff" stroke-width="2"/><path d="M0 13l8 4 6-6" fill="none" stroke="#fff" stroke-width="3"/><circle cx="8" cy="17" r="3.500" fill="#fff"/></svg>
    <svg viewBox="0 0 24 24"><path d="M7 1l5 3.500L7 8 2 4.500zM17 1l5 3.500L17 8l-5-3.500zM7 8l5 3.500L7 15l-5-3.500zM17 8l5 3.500-5 3.500-5-3.500zM12 15.500l5 3.500-5 3.500L7 19z" fill="#fff"/></svg>
    <div class="lang">ENG<br>US</div>
    <svg class="nw" viewBox="0 0 18 18"><path d="M12 3H1.500v10H14V9M4.500 16.500h7M7.500 13v3.500" fill="none" stroke="#fff" stroke-width="1.200"/><rect x="12.500" y="1.500" width="4" height="6" rx="1" fill="none" stroke="#fff" stroke-width="1.200"/></svg>
    <svg class="vol" viewBox="0 0 18 18"><path d="M1.500 6.500H4L8 3v12l-4-3.500H1.500z" fill="none" stroke="#fff" stroke-width="1.200"/><path d="M10.500 6.500q2 2.500 0 5" fill="none" stroke="#fff" stroke-width="1.200"/><path d="M12.500 4.500q3.500 4.500 0 9M15 3q4 6 0 12" fill="none" stroke="#7b957c" stroke-width="1"/></svg>
    <div class="clock">14:06:56<br>2023/11/14</div>
    <div class="count">12</div>
  </div>
</div>
</body>
</html>
```

FILE: styles.css
```css
*, *::before, *::after { box-sizing: border-box; }
body {
  margin: 0;
  width: 2560px;
  height: 1440px;
  overflow: hidden;
  display: flex;
  flex-direction: column;
  background: #f0f0f0;
  color: #000;
  font: 12px/15px "Open Sans", "Noto Sans", sans-serif;
  letter-spacing: -0.32px;
}
svg { display: block; flex: none; }
svg text { letter-spacing: 0; font-family: "Open Sans", sans-serif; }
.defs { position: absolute; }

/* title and menu */
.titlebar { height: 23px; flex: none; display: flex; align-items: center; background: #6aa666; padding-left: 2px; }
.appicon { width: 16px; height: 16px; margin-right: 6px; }
.winbtns { margin-left: auto; display: flex; gap: 33px; padding: 0 19px 3px 0; }
.winbtns svg { width: 12.500px; height: 12px; }
.fps {
  position: absolute;
  left: 2518px;
  top: 5px;
  font: 700 31px/38px "Open Sans", sans-serif;
  color: #76b900;
  letter-spacing: 0;
}
.menubar { height: 18px; flex: none; display: flex; gap: 14px; padding: 2px 7px 0; background: #fff; letter-spacing: -0.38px; }
.menubar u { text-underline-offset: 2px; }

/* toolbars */
.toolbar { display: flex; align-items: center; }
.toolbar i { width: 35px; height: 33px; flex: none; display: flex; align-items: center; justify-content: center; border: 1px solid transparent; position: relative; }
.toolbar i svg { width: 24px; height: 24px; overflow: visible; }
.toolbar b { width: 1px; height: 29px; background: #8c8c8c; flex: none; margin: 0 2px 0 5px; }
.toolbar i.active { background: #cce8ff; border-color: #99d1ff; border-radius: 2px; }
.toolbar.top { height: 40px; flex: none; padding-left: 2px; }
.toolbar.second { height: 36px; flex: none; padding: 0 0 1px 5px; border-bottom: 1px solid #a0a0a0; }
.toolbar.second i { margin-left: 2px; width: 33px; }
.toolbar.second b { margin: 0 5px 0 4px; }

.select {
  height: 23px;
  display: flex;
  align-items: center;
  justify-content: space-between;
  padding: 0 4px;
  background: #fdfdfd;
  border: 1px solid #d0d0d0;
  border-bottom-color: #b4b4b4;
  border-radius: 2px;
}
.select .chev { width: 10px; height: 6px; }
.select.layer { width: 138px; margin: 0 -1px 0 3px; border-color: #8c8c8c; padding-left: 6px; letter-spacing: -0.5px; }
.select.layer em { width: 14px; height: 14px; background: #4d7fc4; border: 1px solid #000; margin-right: 5px; }
.select.layer span { flex: 1; }
.w177 { width: 177px; }
.w150 { width: 150px; }
.w196 { width: 196px; }
.w96 { width: 96px; }

/* working area */
.work { display: flex; height: 1222px; flex: none; border-bottom: 1px solid #a0a0a0; }
.toolbar.side { flex-direction: column; padding-top: 2px; margin-top: 1px; }
.toolbar.side i { width: 33px; height: 33px; margin: 1px 0; }
.toolbar.side b { width: 29px; height: 1px; margin: 3px 0 4px; }
.toolbar.left { width: 38px; border-right: 1px solid #a0a0a0; padding-right: 1px; }
.toolbar.right { width: 42px; border-left: 1px solid #a0a0a0; border-right: 4px solid #dcdcdc; padding-right: 1px; }
.toolbar.side i.more::after { content: ""; position: absolute; right: 0; bottom: -1px; border: 4px solid; border-color: transparent #000 #000 transparent; }
.board { margin-top: 1px; background: #001023; }
.silk text {
  font: 400 90px "DejaVu Sans", sans-serif;
  fill: #e8b2a7;
  stroke: #e8b2a7;
  stroke-width: 1.500;
  stroke-linejoin: round;
}
.net text { font-family: "DejaVu Sans Mono", monospace; fill: #f2f2f2; fill-opacity: 0.74; white-space: pre; }
.net text.mp { font-family: Lato, "Open Sans", sans-serif; }
.net.blue text { fill: #f2f4f8; }
.net.dark text { fill: #333; fill-opacity: 0.95; }

/* appearance panel */
.panel { width: 180px; display: flex; flex-direction: column; letter-spacing: 0; }
.panel h2 { margin: 0; height: 20px; font: 12.500px/20px "Open Sans", sans-serif; background: #b9b9b9; padding-left: 3px; flex: none; letter-spacing: -0.1px; }
.tabs { display: flex; align-items: flex-end; height: 28px; padding-left: 1px; letter-spacing: -0.1px; }
.tab { height: 20px; width: 50.500px; padding: 2px 0 0 4px; border: 1px solid #e3e3e3; border-width: 1px 1px 0 0; background: #f3f3f3; }
.tab.sel { height: 22px; padding-left: 6px; background: #f9f9f9; }
.tab.nets { width: 46px; padding-left: 6px; }
.page { height: 951px; flex: none; margin-right: 3px; padding: 1px 1px 0 4px; background: #f9f9f9; border-right: 1px solid #e3e3e3; border-bottom: 1px solid #dcdcdc; }
.layers { list-style: none; margin: 0; padding: 0; height: 859px; background: #f0f0f0; letter-spacing: -0.3px; }
.layers li { height: 18px; display: flex; align-items: center; padding-left: 17px; position: relative; top: 0.5px; }
.layers em { width: 14px; height: 11px; margin-right: 6px; }
.layers svg { width: 16px; height: 16px; margin-right: 5px; }
.layers .cur { background: #e1e1e1; }
.layers .cur::before { content: ""; position: absolute; left: 6px; top: 4px; border: 5px solid transparent; border-left-color: #3b3bff; border-right: 0; }
.options { margin: 5px 4px 0 5px; height: 83px; background: #fff; letter-spacing: -0.2px; }
.fold { display: flex; align-items: center; height: 15px; padding-left: 3px; }
.fold s { border: 3.500px solid transparent; border-top: 4px solid #000; border-bottom: 0; margin-right: 2px; }
.line { margin-top: 6px; height: 15px; }
.radios { display: grid; grid-template-columns: 65px 49px 1fr; height: 18px; align-items: center; border-bottom: 1px solid #8c8c8c; margin: 0 1px 0 0; letter-spacing: -0.35px; }
.radio, .check { display: flex; align-items: center; white-space: nowrap; }
.radio::before { content: ""; width: 13px; height: 13px; border: 1px solid #666; border-radius: 50%; margin-right: 3px; background: #f3f3f3; flex: none; }
.radio.sel::before { border: 4px solid #005fb8; background: #fff; }
.check::before { content: ""; width: 13px; height: 13px; border: 1px solid #666; border-radius: 3px; margin-right: 3px; background: #f6f6f6; flex: none; font: 9px/11px "DejaVu Sans"; text-align: center; color: #fff; }
.check.sel::before { content: "✓"; background: #005fb8; border-color: #005fb8; }
.check.flip { margin-top: 10px; }
.check.flip::before { margin-right: 4px; }
.presets { height: 99px; flex: none; padding: 7px 7px 0; display: flex; flex-direction: column; }
.presets label { height: 17px; letter-spacing: -0.2px; }
.presets .select { margin-bottom: 3px; }
.panel .filter-head { border-top: 4px solid #dcdcdc; height: 24px; }
.filter { display: grid; grid-template-columns: 92px 88px; grid-auto-rows: 15px; padding: 5px 0 0 5px; letter-spacing: -0.36px; }

/* message panel and status bar */
.info { height: 31px; flex: none; padding-left: 11px; display: grid; grid-template-columns: 91px 85px 87px 74px 483px 1fr; border-bottom: 1px solid #d7d7d7; white-space: nowrap; letter-spacing: -0.35px; }
.status { height: 22px; flex: none; display: grid; grid-template-columns: 1490px 77px 160px 252px 183px 67px 172px 1fr; border-bottom: 1px solid #a9b8a9; white-space: nowrap; }
.status div { border-left: 1px solid #d7d7d7; padding: 3px 0 0 3px; margin-top: 1px; letter-spacing: -0.5px; }
.status .path { border: 0; padding-left: 2px; letter-spacing: -0.3px; }

/* taskbar */
.taskbar { height: 48px; flex: none; display: flex; justify-content: space-between; background: #29512c; color: #fff; }
.apps { display: flex; gap: 4px; padding: 4px 0 4px 13px; }
.apps a { width: 40px; height: 40px; display: flex; align-items: center; justify-content: center; border-radius: 4px; position: relative; }
.apps svg { width: 24px; height: 24px; }
.apps .run::after { content: ""; position: absolute; bottom: 1px; left: 17px; width: 6px; height: 3px; border-radius: 2px; background: #9aa69b; }
.apps .alert { background: #4a282b; }
.apps .alert::after { background: #ff99a4; }
.apps .focus { background: #3a5f3d; border: 1px solid #446747; }
.apps .focus::after { width: 16px; left: 11px; bottom: 0; background: #93cf88; }
.badge { position: absolute; left: 22px; top: 0; width: 14px; height: 14px; border-radius: 50%; background: #f0595b; font-size: 10px; line-height: 14px; text-align: center; }
.tray { display: flex; align-items: center; padding-right: 19px; font-size: 11.500px; line-height: 16px; }
.tray svg { width: 16px; height: 16px; margin-right: 16px; }
.lang { width: 36px; text-align: center; margin-left: -5px; margin-right: 10px; }
.tray .nw { width: 18px; height: 18px; margin-right: 6px; }
.tray .vol { width: 18px; height: 18px; margin-right: 9px; }
.clock { width: 70px; text-align: right; }
.count { width: 18px; height: 18px; margin-left: 6px; border-radius: 50%; background: #93cf88; color: #16301a; font-size: 10px; line-height: 18px; text-align: center; }
```
